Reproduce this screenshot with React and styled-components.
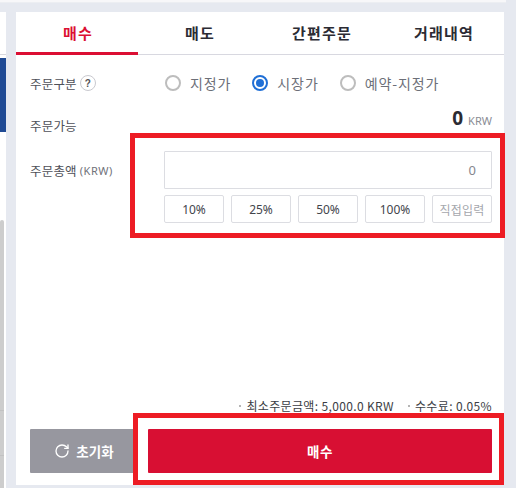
import React from "react";
import styled, { createGlobalStyle } from "styled-components";
import { RotateCw } from "lucide-react";

const Global = createGlobalStyle`
  html, body { margin: 0; padding: 0; background: #e6e9f0; }
  body { font-family: "Noto Sans CJK KR", "Noto Sans", sans-serif; overflow: hidden; }
  * { box-sizing: border-box; }
`;

const Page = styled.div`
  position: relative;
  width: 516px;
  height: 488px;
  overflow: hidden;
  background: #e6e9f0;
`;
const TopStrip = styled.div`
  width: 506px;
  height: 3px;
  background: #f7f7f9;
  border-bottom: 1px solid #eceef2;
`;
const Columns = styled.div`
  display: flex;
  gap: 10px;
  margin-top: 9px;
  height: 473px;
`;
const Side = styled.div`
  width: 6px;
  height: 476px;
  background: #fff;
  display: flex;
  flex-direction: column;
`;
const SideLine = styled.div`
  height: 1px;
  background: #d8d8de;
  margin-top: 42px;
`;
const SideBlue = styled.div`
  height: 74px;
  background: #1f4a94;
  margin-top: 3px;
`;
const SideThumb = styled.div`
  flex: 1;
  width: 4px;
  margin-top: 88px;
  background: #cdcdcd;
  border-radius: 2px 2px 0 0;
  display: flex;
  flex-direction: column;
`;
const ThumbLine = styled.div`
  height: 1px;
  margin-top: ${(p) => p.$top}px;
  background: #c2c2c2;
`;
const Panel = styled.div`
  width: 488px;
  background: #fff;
  display: flex;
  flex-direction: column;
`;
const Tabs = styled.div`
  display: grid;
  grid-template-columns: repeat(4, 122px);
  height: 43px;
  border-bottom: 1px solid #d8d8e0;
`;
const Tab = styled.div`
  display: flex;
  align-items: center;
  justify-content: center;
  height: 43px;
  padding-left: 2px;
  font-size: 15px;
  letter-spacing: 1.2px;
  font-weight: 700;
  color: ${(p) => (p.$active ? "#db0f33" : "#2b2b33")};
  border-bottom: 3px solid ${(p) => (p.$active ? "#db0f33" : "transparent")};
`;
const Body = styled.div`
  flex: 1;
  padding: 0 12px 0 14px;
  display: flex;
  flex-direction: column;
`;
const Row = styled.div`
  display: flex;
  align-items: center;
  height: 24px;
  margin-top: ${(p) => p.$top}px;
`;
const Label = styled.div`
  width: 134px;
  flex: none;
  font-size: 12.5px;
  letter-spacing: 0.2px;
  color: #4e5058;
  display: flex;
  align-items: center;
  gap: 3px;
`;
const Help = styled.span`
  width: 16px;
  height: 16px;
  border: 1px solid #c9c9cf;
  border-radius: 50%;
  font-size: 10px;
  font-weight: 700;
  color: #555;
  display: inline-flex;
  align-items: center;
  justify-content: center;
  font-family: "Liberation Sans", sans-serif;
`;
const Unit = styled.span`
  font-size: 11px;
  color: #70727a;
  font-family: "Noto Sans", sans-serif;
  letter-spacing: 0.5px;
`;
const Radios = styled.div`
  display: flex;
  align-items: center;
`;
const RadioItem = styled.div`
  display: flex;
  align-items: center;
  gap: 9px;
  margin-right: ${(p) => p.$gap}px;
  font-size: 14px;
  letter-spacing: 0.9px;
  color: #6c6f78;
`;
const Dot = styled.span`
  width: 16px;
  height: 16px;
  border-radius: 50%;
  background: #fff;
  border: ${(p) => (p.$on ? "2px solid #1f6fd6" : "2px solid #bdbdbd")};
  display: inline-flex;
  align-items: center;
  justify-content: center;
  margin-left: 1px;
  &::after {
    content: "";
    width: 8px;
    height: 8px;
    border-radius: 50%;
    background: ${(p) => (p.$on ? "#1f6fd6" : "transparent")};
  }
`;
const Amount = styled.div`
  flex: 1;
  display: flex;
  justify-content: flex-end;
  align-items: baseline;
  gap: 5px;
  padding-bottom: 14px;
`;
const AmountValue = styled.span`
  font-size: 19px;
  font-weight: 700;
  color: #2b2b33;
  font-family: "Noto Sans", sans-serif;
`;
const AmountUnit = styled.span`
  font-size: 11px;
  color: #8a8c94;
  font-family: "Noto Sans", sans-serif;
`;
const OrderTotal = styled.div`
  display: flex;
  margin-top: 14px;
`;
const OrderLabel = styled(Label)`
  height: 38px;
`;
const Field = styled.div`
  width: 328px;
  display: flex;
  flex-direction: column;
  gap: 6px;
`;
const Input = styled.div`
  height: 38px;
  border: 1px solid #dcdde2;
  border-radius: 1px;
  display: flex;
  align-items: center;
  justify-content: flex-end;
  padding-right: 15px;
  font-size: 13px;
  color: #85878e;
  font-family: "Noto Sans", sans-serif;
`;
const Pcts = styled.div`
  display: grid;
  grid-template-columns: repeat(5, 60px);
  justify-content: space-between;
`;
const Pct = styled.div`
  height: 28px;
  border: 1px solid #dcdde2;
  border-radius: 2px;
  display: flex;
  align-items: center;
  justify-content: center;
  font-size: 12px;
  color: ${(p) => (p.$muted ? "#a5a7ad" : "#43454c")};
  letter-spacing: ${(p) => (p.$muted ? "0.2px" : "0")};
  font-family: ${(p) => (p.$muted ? '"Noto Sans CJK KR"' : '"Noto Sans"')}, sans-serif;
`;
const Notes = styled.div`
  margin-top: auto;
  display: flex;
  justify-content: flex-end;
  gap: 14px;
  font-size: 12px;
  line-height: 14px;
  color: #3b3d44;
  letter-spacing: 0.35px;
`;
const Note = styled.span`
  display: inline-flex;
  align-items: center;
  gap: 5px;
  &::before {
    content: "";
    width: 2px;
    height: 2px;
    background: #b5b5b5;
  }
`;
const Actions = styled.div`
  display: flex;
  gap: 10px;
  margin-top: 16px;
  margin-bottom: 12px;
`;
const ResetButton = styled.div`
  width: 108px;
  height: 44px;
  background: #97979f;
  border-radius: 1px;
  color: #fff;
  font-size: 13.5px;
  font-weight: 700;
  display: flex;
  align-items: center;
  justify-content: center;
  gap: 6px;
`;
const BuyButton = styled.div`
  flex: 1;
  height: 44px;
  background: #d80f33;
  border-radius: 1px;
  color: #fff;
  font-size: 13.5px;
  letter-spacing: 0.5px;
  font-weight: 700;
  display: flex;
  align-items: center;
  justify-content: center;
`;
const Highlight = styled.div`
  position: absolute;
  left: ${(p) => p.$x}px;
  top: ${(p) => p.$y}px;
  width: ${(p) => p.$w}px;
  height: ${(p) => p.$h}px;
  border: 5px solid #ed1c24;
`;

export default function App() {
  return (
    <Page>
      <Global />
      <TopStrip />
      <Columns>
        <Side>
          <SideLine />
          <SideBlue />
          <SideThumb>
            <ThumbLine $top={190} />
            <ThumbLine $top={44} />
          </SideThumb>
        </Side>
        <Panel>
          <Tabs>
            <Tab $active>매수</Tab>
            <Tab>매도</Tab>
            <Tab>간편주문</Tab>
            <Tab>거래내역</Tab>
          </Tabs>
          <Body>
            <Row $top={16}>
              <Label>주문구분 <Help>?</Help></Label>
              <Radios>
                <RadioItem $gap={20}><Dot />지정가</RadioItem>
                <RadioItem $gap={20}><Dot $on />시장가</RadioItem>
                <RadioItem $gap={0}><Dot />예약-지정가</RadioItem>
              </Radios>
            </Row>
            <Row $top={18}>
              <Label>주문가능</Label>
              <Amount>
                <AmountValue>0</AmountValue>
                <AmountUnit>KRW</AmountUnit>
              </Amount>
            </Row>
            <OrderTotal>
              <OrderLabel>주문총액 <Unit>(KRW)</Unit></OrderLabel>
              <Field>
                <Input>0</Input>
                <Pcts>
                  <Pct>10%</Pct>
                  <Pct>25%</Pct>
                  <Pct>50%</Pct>
                  <Pct>100%</Pct>
                  <Pct $muted>직접입력</Pct>
                </Pcts>
              </Field>
            </OrderTotal>
            <Notes>
              <Note>최소주문금액: 5,000.0 KRW</Note>
              <Note>수수료: 0.05%</Note>
            </Notes>
            <Actions>
              <ResetButton><RotateCw size={16} strokeWidth={2} />초기화</ResetButton>
              <BuyButton>매수</BuyButton>
            </Actions>
          </Body>
        </Panel>
      </Columns>
      <Highlight $x={130} $y={133} $w={375} $h={105} />
      <Highlight $x={133} $y={413} $w={371} $h={72} />
    </Page>
  );
}
